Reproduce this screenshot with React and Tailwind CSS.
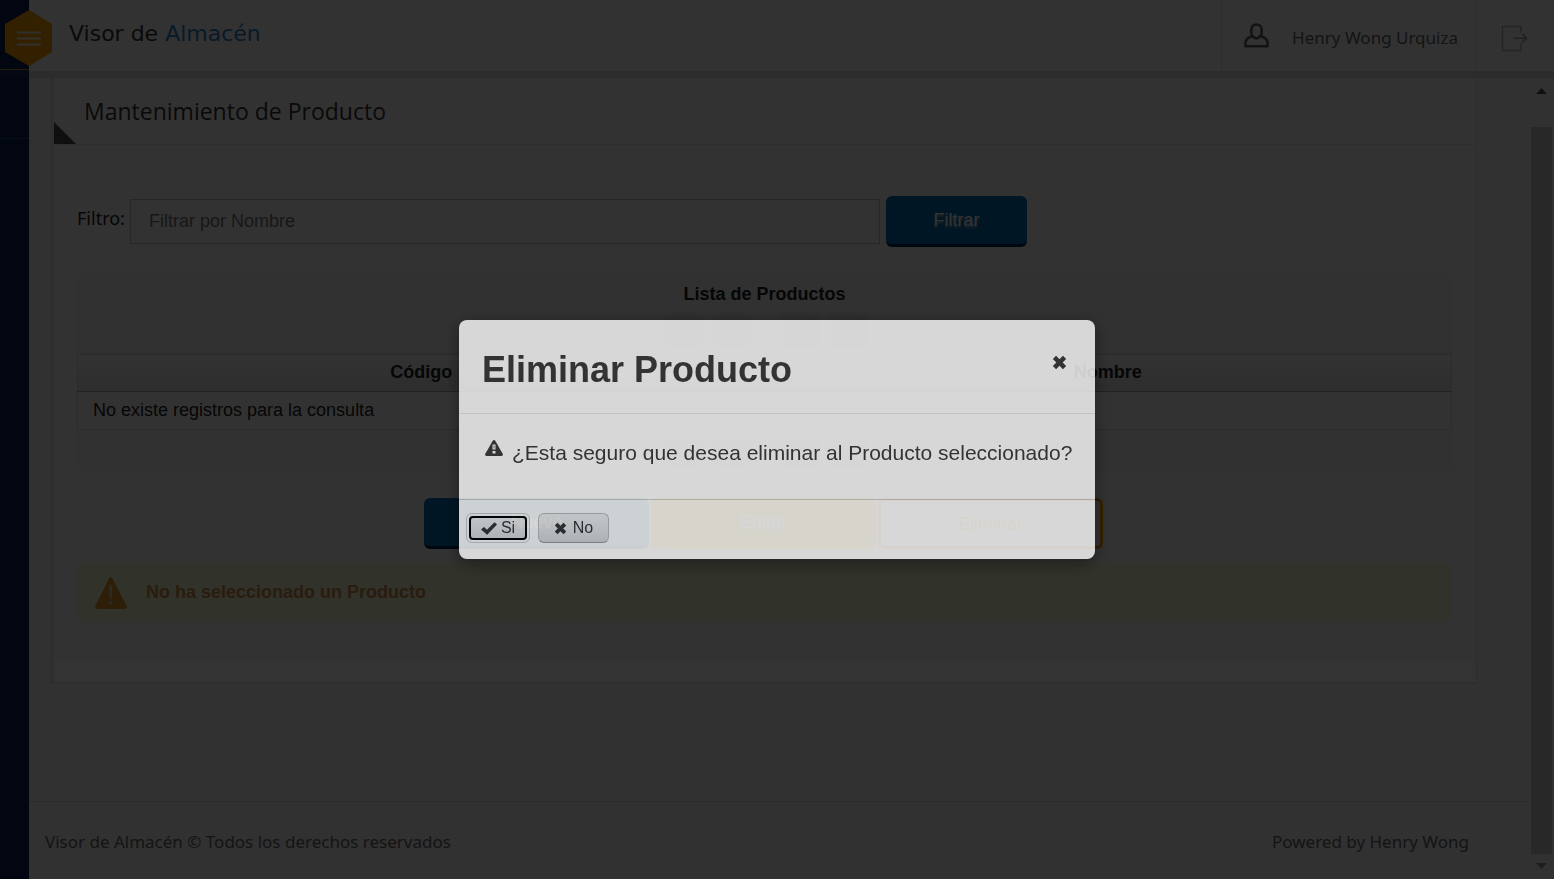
function MenuHexagon() {
  return (
    <svg viewBox="0 0 48 56" className="block h-14 w-12" aria-hidden="true">
      <path d="M24 0 47 14V42L24 56 0 42V14Z" fill="#f8a000" />
      <path d="M12.500 22.500H35M12.500 28.500H35M12.500 34.500H35" stroke="#f7efe0" strokeWidth="2" strokeLinecap="round" />
    </svg>
  );
}

function UserIcon() {
  return (
    <svg viewBox="0 0 26 25" className="h-[25px] w-[26px]" fill="none" stroke="#606060" strokeWidth="2.600" strokeLinejoin="round" aria-hidden="true">
      <path d="M9 13.500C7.900 12.600 7.300 11 7.300 9.300V6.800c0-3.200 2.200-5.300 5.200-5.300s5.200 2.100 5.200 5.300v2.500c0 1.700-.6 3.300-1.700 4.200" />
      <path d="M8.800 13.200C5 13.600 1.500 16.200 1.500 20v3.200h22V20c0-3.800-3.500-6.400-7.300-6.800-.9 1.500-2.200 2.200-3.700 2.200s-2.800-.7-3.700-2.200Z" />
    </svg>
  );
}

function ExitIcon() {
  return (
    <svg viewBox="0 0 27 27" className="h-[27px] w-[27px]" fill="none" stroke="#b5b5b5" strokeWidth="1.500" aria-hidden="true">
      <path d="M20 8V1.500H1.500v24H20V18" />
      <path d="M12.500 13.200H25M21.500 9l4 4.200-4 4.200" stroke="#999" />
    </svg>
  );
}

function WarningBadge() {
  return (
    <svg viewBox="0 0 34 34" className="h-[34px] w-[34px]" aria-hidden="true">
      <path d="M15.200 2.200q1.500-2.400 3 0L32.600 29.500q1 3-2 3.500H3.500q-3-.5-2-3.500Z" fill="#e0942a" />
      <path d="M15 9.500q1.800-1.500 3.600 0L18 23h-2.400Z" fill="#ecd0a0" />
      <circle cx="16.800" cy="27" r="2" fill="#ecd0a0" />
    </svg>
  );
}

function AlertIcon() {
  return (
    <svg viewBox="0 0 18 16" className="h-4 w-[18px]" aria-hidden="true">
      <path d="M7.600 1q1.400-1.800 2.800 0L17.800 14q.6 1.800-1.300 2h-15q-1.900-.2-1.300-2Z" fill="#333" />
      <path d="M7.500 4.500h3v5h-3ZM7.500 11h3v2.500h-3Z" fill="#fff" />
      <path d="M8.500 5.500h1v3h-1Z" fill="#777" />
    </svg>
  );
}

function CrossIcon({ className }) {
  return (
    <svg viewBox="0 0 14 14" className={className} aria-hidden="true">
      <path d="M2.300 2.300 11.700 11.700M11.700 2.300 2.300 11.700" stroke="#333" strokeWidth="4.200" />
    </svg>
  );
}

function CheckIcon() {
  return (
    <svg viewBox="0 0 16 13" className="h-[13px] w-4" aria-hidden="true">
      <path d="M0 7.500 3 5l3 2.800L13.500.3 16 2.500 6.200 12.700Z" fill="#333" />
    </svg>
  );
}

function PageButton({ label, path }) {
  return (
    <button type="button" aria-label={label} className="flex h-[34px] w-[42px] items-center justify-center rounded-md bg-[#e9e9e9]">
      <svg viewBox="0 0 16 8" className="h-2 w-4" aria-hidden="true">
        <path d={path} fill="#c0c0c0" />
      </svg>
    </button>
  );
}

function Paginator() {
  return (
    <div className="flex justify-center gap-[6px]">
      <PageButton label="Primera página" path="M2 0H4V8H2ZM14 0V8L6 4Z" />
      <PageButton label="Página anterior" path="M7 0V8L0 4ZM15 0V8L8 4Z" />
      <span className="w-3" />
      <PageButton label="Página siguiente" path="M1 0 8 4 1 8ZM9 0 16 4 9 8Z" />
      <PageButton label="Última página" path="M2 0 10 4 2 8ZM12 0H14V8H12Z" />
    </div>
  );
}

function Header() {
  return (
    <header className="flex h-[78px] shrink-0 border-b-[7px] border-[#dcdcdc] bg-[#fbfbfb]">
      <h1 className="grow pt-4 pl-10 font-['DejaVu_Sans',sans-serif] text-[22px] leading-9 text-[#333]">
        Visor de <span className="text-[#2a82c4]">Almacén</span>
      </h1>
      <a href="#perfil" className="flex items-center gap-[22px] border-l border-[#dedede] pr-[17px] pl-[22px] text-[17px] text-[#666]">
        <UserIcon />
        <span className="pt-1">Henry Wong Urquiza</span>
      </a>
      <a href="#salir" aria-label="Salir" className="flex w-[79px] items-center border-l border-[#dedede] pt-[6px] pl-[25px]">
        <ExitIcon />
      </a>
    </header>
  );
}

function ProductPanel() {
  return (
    <section className="border-r border-b-2 border-l-4 border-[#e6e6e6]">
      <div className="flex h-[67px] items-stretch border-b border-[#e6e6e6] bg-[#fbfbfb]">
        <svg viewBox="0 0 22 22" className="w-[22px] self-end" aria-hidden="true">
          <path d="M0 0 22 22H0Z" fill="#4a4a4a" />
        </svg>
        <h2 className="pl-2 font-['Open_Sans',sans-serif] text-[23px] leading-[66px] text-[#333]">Mantenimiento de Producto</h2>
      </div>

      <div className="bg-[#f8f8f8] pt-[51px] pr-6 pb-[38px] pl-[23px] font-['Liberation_Sans',sans-serif] text-lg text-[#222]">
        <form className="flex items-center" onSubmit={(e) => e.preventDefault()}>
          <label htmlFor="filtro" className="w-[53px] shrink-0 pb-2 font-['Noto_Sans',sans-serif] text-[#222]">Filtro:</label>
          <input
            id="filtro"
            type="text"
            placeholder="Filtrar por Nombre"
            className="h-[45px] w-[750px] border border-[#c4c4c4] bg-[#fafafa] px-[18px] placeholder:text-[#757575]"
          />
          <button type="submit" className="ml-[6px] h-[51px] w-[141px] rounded-md border-b-[3px] border-[#00264d] bg-[#0070b8] text-white [text-shadow:0_2px_2px_#aaa]">
            Filtrar
          </button>
        </form>

        <div className="mt-[30px] h-[194px] rounded-lg bg-[#f2f2f2] pt-[5px]">
          <table className="w-full table-fixed border-collapse">
            <caption>
              <span className="mb-1 block leading-6 font-bold">Lista de Productos</span>
              <div className="h-[43px] pt-1"><Paginator /></div>
            </caption>
            <thead>
              <tr className="h-[38px] border border-b-[#a8a8a8] border-[#dcdcdc] bg-linear-to-b from-[#fafafa] to-[#e2e2e2]">
                <th className="pb-[2px] font-bold">Código</th>
                <th className="pb-[2px] font-bold">Nombre</th>
              </tr>
            </thead>
            <tbody>
              <tr className="h-[38px] border border-t-[#a8a8a8] border-[#dcdcdc] bg-[#fbfbfb]">
                <td colSpan="2" className="px-[15px] pb-[2px]">No existe registros para la consulta</td>
              </tr>
            </tbody>
          </table>
          <div className="pt-1"><Paginator /></div>
        </div>

        <div className="mt-[27px] flex justify-center gap-[2px] pr-[2px]">
          <button type="button" className="h-[51px] w-[225px] rounded-md border-b-[3px] border-[#00264d] bg-[#0070b8] text-white [text-shadow:0_2px_2px_#aaa]">Nuevo</button>
          <button type="button" className="h-[51px] w-[225px] rounded-md bg-[#f8b000] pb-1 text-white [text-shadow:0_2px_2px_#aaa]">Editar</button>
          <button type="button" className="h-[51px] w-[225px] rounded-md border-[3px] border-[#f8a000] text-[#f8a800]">Eliminar</button>
        </div>

        <div role="alert" className="mt-[15px] flex h-[57px] items-center gap-[18px] rounded-lg bg-[#f5f7cf] px-[17px] font-bold text-[#d08a4e]">
          <WarningBadge />
          <span className="pb-[2px]">No ha seleccionado un Producto</span>
        </div>
      </div>

      <div className="h-[23px] border-t border-[#efefef] bg-[#fcfcfc]" />
    </section>
  );
}

function ScrollRail() {
  return (
    <div className="flex w-6 shrink-0 flex-col items-center bg-[#f6f6f6] py-[10px] pr-[2px] pl-px" aria-hidden="true">
      <svg viewBox="0 0 11 6" className="h-[6px] w-[11px] shrink-0"><path d="M5.500 0 11 6H0Z" fill="#505050" /></svg>
      <div className="mt-[33px] mb-[9px] w-full grow bg-[#c8c8c8]" />
      <svg viewBox="0 0 11 6" className="h-[6px] w-[11px] shrink-0"><path d="M0 0H11L5.500 6Z" fill="#959595" /></svg>
    </div>
  );
}

function ConfirmDialog() {
  return (
    <div className="fixed inset-0 flex items-center justify-center bg-black/80">
      <div
        role="dialog"
        aria-modal="true"
        aria-labelledby="dialog-title"
        className="w-[636px] max-w-full rounded-lg bg-white font-['Liberation_Sans',sans-serif] text-[#333] opacity-80 shadow-[0_4px_16px_rgba(0,0,0,0.5)]"
      >
        <div className="flex h-[94px] items-start justify-between border-b border-[#e5e5e5] px-[23px] pt-7">
          <h2 id="dialog-title" className="text-4xl leading-[44px] font-bold">Eliminar Producto</h2>
          <button type="button" aria-label="Cerrar" className="mt-[7px] mr-[5px]"><CrossIcon className="h-[15px] w-[15px]" /></button>
        </div>
        <div className="flex items-start gap-[9px] pt-[26px] pr-5 pb-[33px] pl-[26px] text-[21px] leading-[26px]">
          <AlertIcon />
          <p>¿Esta seguro que desea eliminar al Producto seleccionado?</p>
        </div>
        <div className="flex h-[60px] gap-2 border-t border-[#ccc] px-[7px] pt-[13px] text-base">
          <button type="button" className="h-[30px] w-16 rounded-md border border-[#ccc] bg-white p-[2px]">
            <span className="flex h-full items-center justify-center gap-1 rounded-[4px] border-2 border-black bg-linear-to-b from-[#efefef] to-[#dadada]">
              <CheckIcon />Si
            </span>
          </button>
          <button type="button" className="flex h-[30px] w-[71px] items-center justify-center gap-[6px] rounded-md border border-b-[#999] border-[#bbb] bg-linear-to-b from-[#f2f2f2] to-[#d8d8d8]">
            <CrossIcon className="h-[13px] w-[13px]" />No
          </button>
        </div>
      </div>
    </div>
  );
}

export default function App() {
  return (
    <div className="relative flex min-h-screen bg-[#f5f5f5] font-['Noto_Sans',sans-serif]">
      <aside className="w-[29px] shrink-0 bg-[#0d2150]">
        <div className="h-[70px] border-b border-[#b09030]" />
        <div className="h-2 bg-[#15295f]" />
        <div className="h-[61px] border-b border-[#1e4d80]" />
      </aside>
      <button type="button" aria-label="Menú" className="absolute top-[10px] left-[5px]"><MenuHexagon /></button>
      <div className="flex min-w-0 grow flex-col">
        <Header />
        <div className="flex grow">
          <div className="flex min-w-0 grow flex-col">
            <main className="grow pr-[53px] pl-[21px]"><ProductPanel /></main>
            <footer className="flex h-[78px] shrink-0 items-center justify-between border-t border-[#d0d0d0] pt-[2px] pr-[61px] pl-4 text-[17px] text-[#666]">
              <span>Visor de Almacén © Todos los derechos reservados</span>
              <span>Powered by Henry Wong</span>
            </footer>
          </div>
          <ScrollRail />
        </div>
      </div>
      <ConfirmDialog />
    </div>
  );
}
